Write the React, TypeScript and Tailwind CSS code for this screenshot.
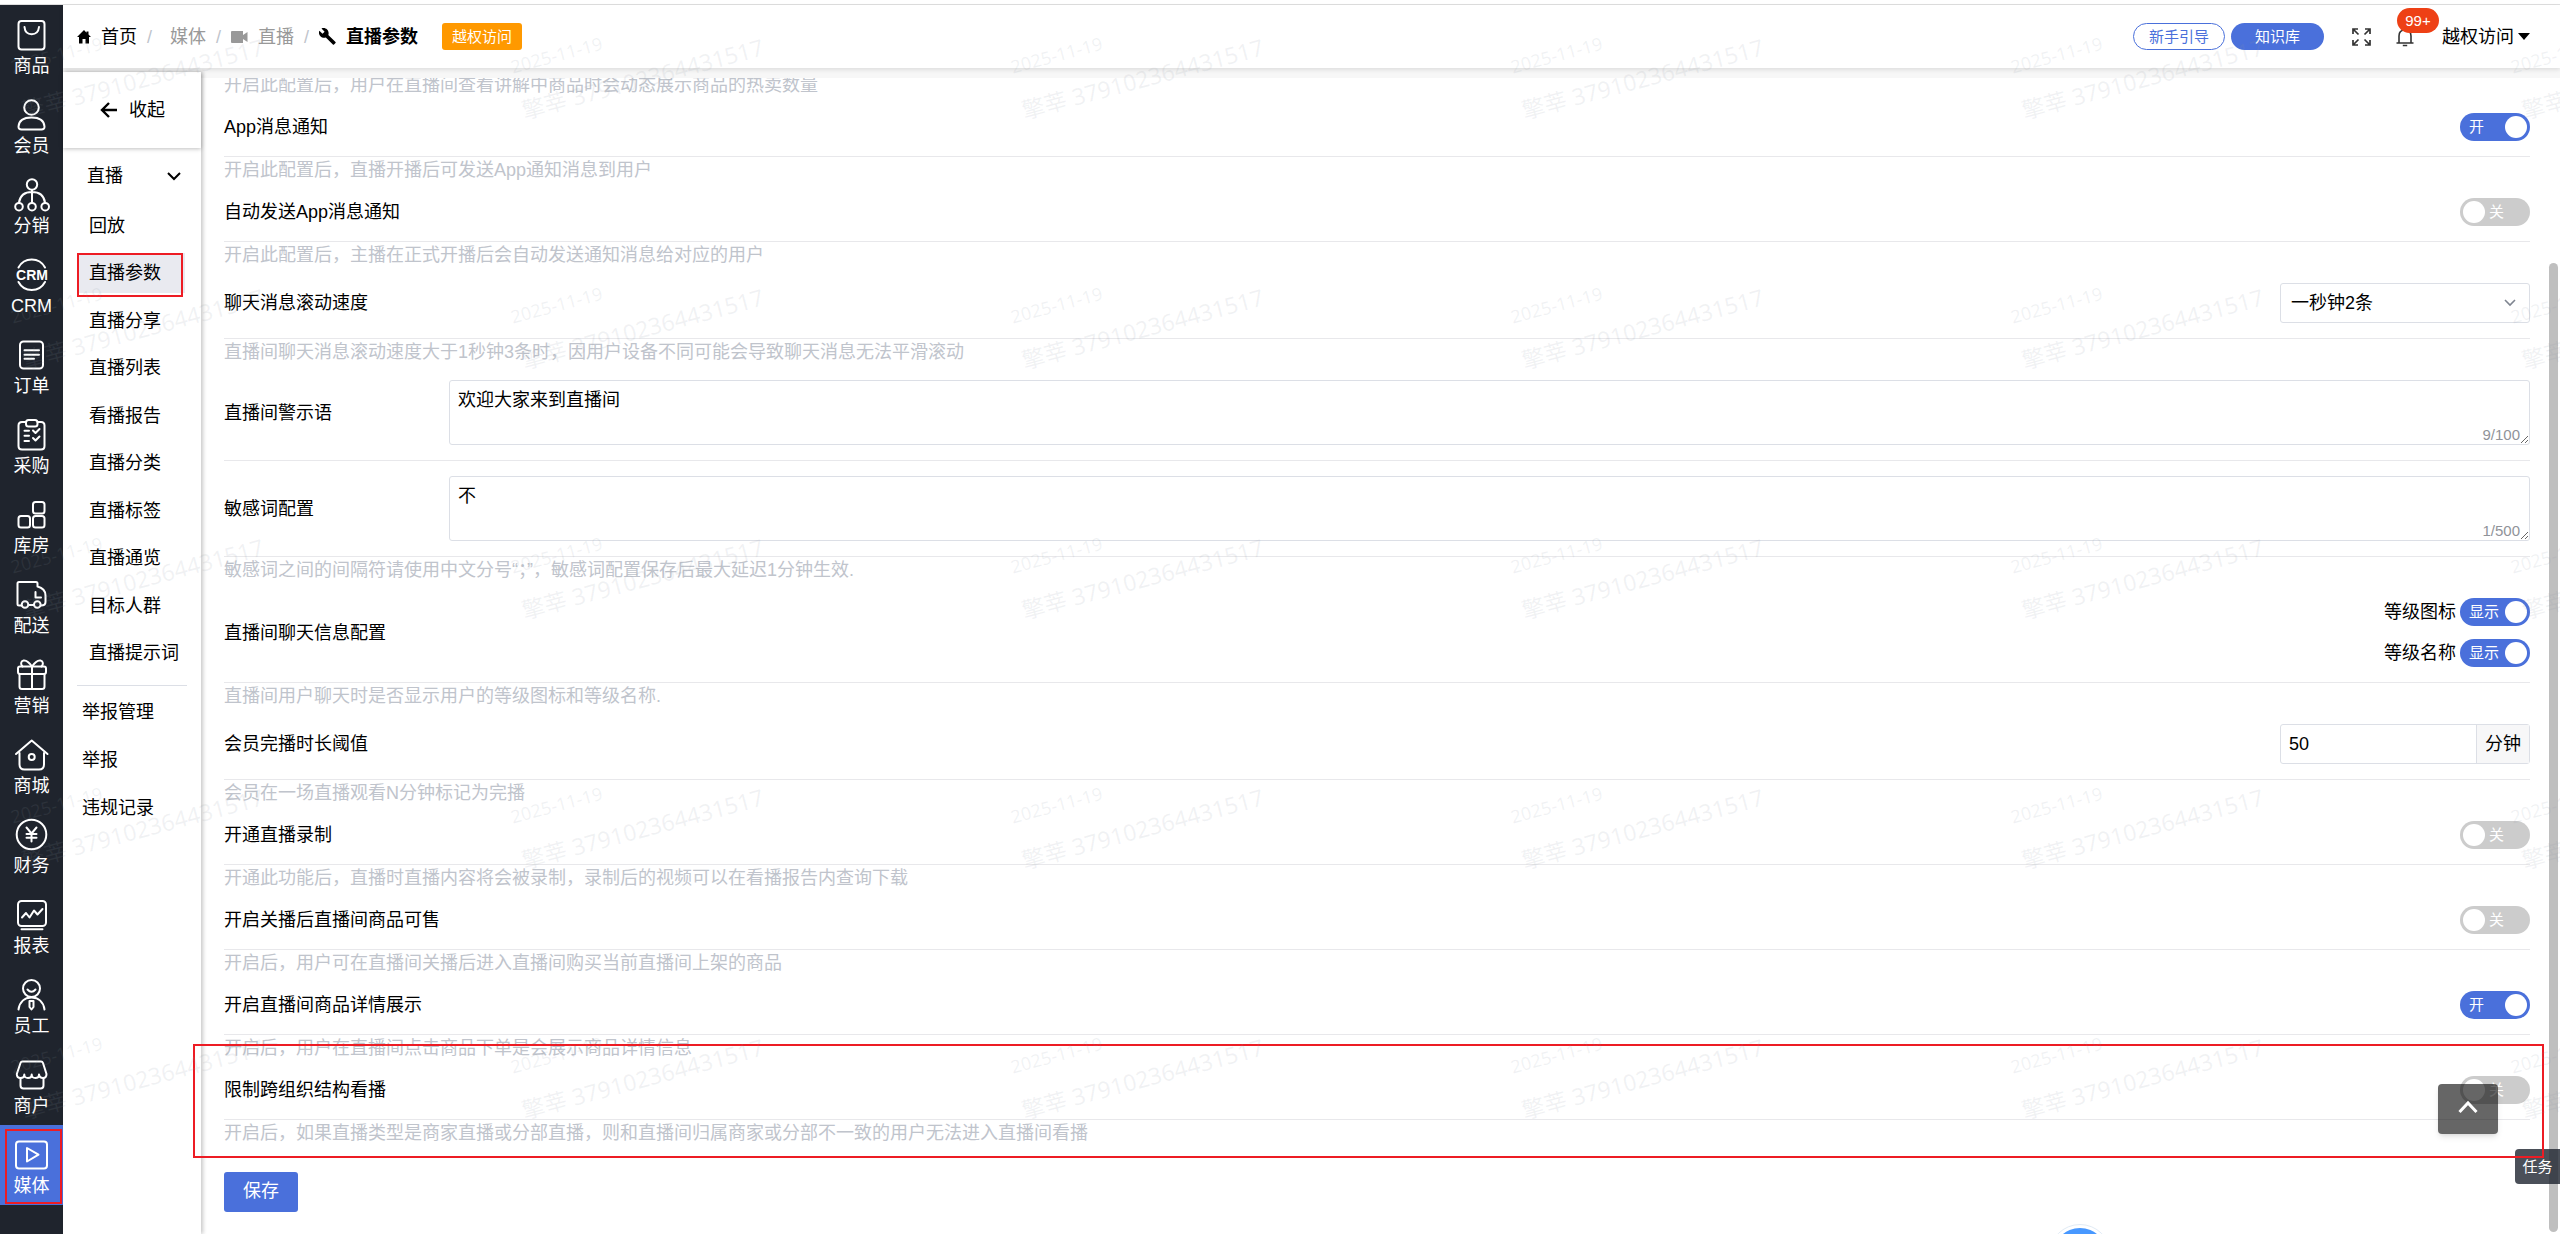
import { useState, type ComponentProps, type ReactNode } from "react";
import { clsx } from "clsx";

interface NavItem {
    name: string,
    icon: ReactNode,
}

interface MenuItem {
    name: string,
    marked?: boolean,
}

const navItems: NavItem[] = [
    {
        name: "商品",
        icon: <>
            <rect x="4.5" y="4" width="26" height="28.5" rx="3" />
            <path d="M10.5 10c.4 4.6 3.2 7.2 7.2 7.2S24.5 14.6 25 10" />
        </>
    },
    {
        name: "会员",
        icon: <>
            <circle cx="17.5" cy="10.5" r="7.3" />
            <path d="M4.5 29.5C5 23.5 10 20.5 17.5 20.5S30 23.5 30.5 29.5C30.6 31.5 29.5 32.5 27.5 32.5H7.5C5.5 32.5 4.4 31.5 4.5 29.5Z" />
        </>
    },
    {
        name: "分销",
        icon: <>
            <circle cx="18" cy="7.5" r="5.2" />
            <path d="M18 13v12.5M5 25.5C6 18.5 11 15 18 15s12 3.5 13 10.5" />
            <circle cx="5" cy="29.7" r="3.8" />
            <circle cx="18" cy="29.7" r="3.8" />
            <circle cx="31.2" cy="29.7" r="3.8" />
        </>
    },
    {
        name: "CRM",
        icon: <>
            <path d="M4.5 10.5a15 15 0 0 1 26.5 0M4.5 25a15 15 0 0 0 26.5 0" />
            <text x="18" y="22.5" textAnchor="middle" fontSize="14" fontWeight="700" fill="currentColor" stroke="none">CRM</text>
        </>
    },
    {
        name: "订单",
        icon: <>
            <rect x="6" y="4.5" width="23" height="27" rx="3.5" />
            <path d="M10.5 13.3h14.5M10.5 17.7h14.5M10.5 21.8h9.5" />
        </>
    },
    {
        name: "采购",
        icon: <>
            <path d="M12 5H8Q4.5 5 4.5 8.5V29Q4.5 32.5 8 32.5H27Q30.5 32.5 30.5 29V8.5Q30.5 5 27 5H23.5" />
            <rect x="12" y="3" width="11.5" height="6.5" rx="2.5" />
            <path d="M10.5 13.7h4.5M10.5 18.7h4.5M10.5 24h4.5M19 13.5l2.5 2.5 4-4M19 21l2.5 2.5 4-4" />
        </>
    },
    {
        name: "库房",
        icon: <>
            <rect x="19" y="5" width="11.5" height="11.5" rx="2.5" />
            <rect x="4.5" y="19" width="11.5" height="11.5" rx="2.5" />
            <rect x="19" y="19" width="11.5" height="11.5" rx="2.5" />
        </>
    },
    {
        name: "配送",
        icon: <>
            <path d="M7.5 28.5H5Q3.5 28.5 3.5 27V6.5Q3.5 5 5 5H22Q23.5 5 23.5 6.5V9.5Q31.5 11.5 31.5 18.5V25Q31.5 28.5 27 28.5M14.5 28h5" />
            <path d="M21.5 15v5.5h5.5" />
            <circle cx="11" cy="27.5" r="3.3" />
            <circle cx="23.3" cy="27.5" r="3.3" />
        </>
    },
    {
        name: "营销",
        icon: <>
            <rect x="4" y="9.5" width="28" height="7.5" rx="2" />
            <path d="M5.5 17V29.5Q5.5 32 8 32H28Q30.5 32 30.5 29.5V17M18 9.5V32M18 9.5C15 5 12.5 3 9.5 3.5 6.5 4.2 6.5 7.5 8.5 9.5M18 9.5C21 5 23.5 3 26.5 3.5 29.5 4.2 29.5 7.5 27.5 9.5" />
        </>
    },
    {
        name: "商城",
        icon: <>
            <path d="M2 17 17.7 3.5 33.5 17" />
            <path d="M5.5 16V27.5Q5.5 32.5 10.5 32.5H25Q30 32.5 30 27.5V16" />
            <circle cx="17.7" cy="20" r="3" />
        </>
    },
    {
        name: "财务",
        icon: <>
            <circle cx="17.5" cy="17.5" r="14.8" />
            <path d="M12.5 10.5l5 6 5-6M17.5 16.5v8M12.5 17h10M12.5 20.8h10" />
        </>
    },
    {
        name: "报表",
        icon: <>
            <rect x="4" y="4" width="28" height="25" rx="3.5" />
            <path d="M8 20.5l4-4.5 3.5 4.5 4.5-7 3.5 4 5-5.5M7.5 32.3h21" />
        </>
    },
    {
        name: "员工",
        icon: <>
            <circle cx="17.5" cy="11.5" r="8.5" />
            <path d="M13.5 12.5q4 4.5 8 0M4.5 32.5C5.5 25 10.5 20.5 17.5 20.5S29.5 25 30.5 32.5M15.5 24h4v6l-2 2.5-2-2.5Z" />
        </>
    },
    {
        name: "商户",
        icon: <>
            <path d="M8.5 4.5H27Q28.5 4.5 29 6L32.5 17Q32.5 21 29 21T25 17.5Q25 21 21.3 21T17.7 17.5Q17.7 21 14 21T10.3 17.5Q10.3 21 6.5 21T2.8 17L6.5 6Q7 4.5 8.5 4.5Z" />
            <path d="M6.5 21V28.5Q6.5 31.5 9.5 31.5H26.5Q29.5 31.5 29.5 28.5V21" />
        </>
    },
    {
        name: "媒体",
        icon: <>
            <rect x="2" y="4.5" width="31" height="27" rx="3" />
            <path d="M13 11v13.5l11.5-6.8Z" />
        </>
    },
];

const liveMenu: MenuItem[] = [
    { name: "回放" },
    { name: "直播参数", marked: true },
    { name: "直播分享" },
    { name: "直播列表" },
    { name: "看播报告" },
    { name: "直播分类" },
    { name: "直播标签" },
    { name: "直播通览" },
    { name: "目标人群" },
    { name: "直播提示词" },
];

const reportMenu = ["举报管理", "举报", "违规记录"];

export default function App() {
    return <div className="relative flex h-screen flex-col overflow-hidden bg-white font-['Liberation_Sans','Noto_Sans_CJK_SC',sans-serif] text-lg/[26px] text-black">
        <div className="h-[5px] shrink-0 border-b border-[#dedede]" />
        <div className="flex min-h-0 flex-1">
            <MainNav />
            <div className="flex min-w-0 flex-1 flex-col bg-[#f7f7f7]">
                <TopBar />
                <div className="flex min-h-0 flex-1">
                    <SubMenu />
                    <Settings />
                </div>
            </div>
        </div>

        <div className="absolute top-[263px] right-0.5 bottom-0.5 w-[9px] rounded-full bg-[#bfbfbf]" />
        <button aria-label="回到顶部" className="absolute right-[62px] bottom-[100px] flex h-[50px] w-[60px] items-center justify-center rounded-sm bg-black/60 pb-1 text-white shadow-md">
            <svg viewBox="0 0 20 14" className="h-3.5 w-5" fill="none" stroke="currentColor" strokeWidth="3">
                <path d="M1.5 12 10 3l8.5 9" />
            </svg>
        </button>
        <button className="absolute right-0 bottom-[50px] h-[35px] w-[45px] rounded-l-sm bg-[#1e2430]/80 text-[15px]/[35px] text-white">任务</button>
        <div className="absolute right-[449px] -bottom-[52px] size-[62px] rounded-full border border-[#e1ebf5] bg-white p-[3px]">
            <div className="size-full rounded-full bg-[#4898ff]" />
        </div>
        <div className="pointer-events-none absolute top-[1044px] right-4 left-[193px] z-20 h-[114px] border-2 border-[#ed1c24]" />
        <Watermark />
    </div>;
}

function MainNav() {
    const [current, setCurrent] = useState("媒体");

    return <nav className="w-[63px] shrink-0 bg-[#1f242d] text-white">
        {navItems.map(item => <button
            key={item.name}
            onClick={() => setCurrent(item.name)}
            className={clsx(
                "relative flex h-20 w-full flex-col items-center pt-3",
                current == item.name && "bg-[#4a70db]"
            )}
        >
            <svg viewBox="0 0 36 36" className="size-9 shrink-0" fill="none" stroke="currentColor" strokeWidth="2" strokeLinecap="round" strokeLinejoin="round">
                {item.icon}
            </svg>
            <span>{item.name}</span>
            {item.name == "媒体" && <span className="absolute top-1 right-px bottom-px left-[5px] border-2 border-[#ed1c24]" />}
        </button>)}
    </nav>;
}

function TopBar() {
    return <header className="z-10 flex h-[63px] shrink-0 items-center bg-white pr-[30px] pl-3.5 shadow-[0_2px_4px_rgba(0,0,0,0.1)]">
        <a href="#" className="flex items-center gap-2.5">
            <svg viewBox="0 0 14 14" className="size-3.5" fill="currentColor">
                <path d="M7 0 0 7h2v6.5h3.5V9h3v4.5H12V7h2L11.5 4.5V1.5h-2v1.2Z" />
            </svg>
            首页
        </a>
        <Slash />
        <a href="#" className="ml-[18px] text-[#999]">媒体</a>
        <Slash />
        <a href="#" className="ml-2.5 flex items-center gap-2.5 text-[#999]">
            <svg viewBox="0 0 17 12" className="h-3 w-[17px]" fill="currentColor">
                <path d="M1 0h11v4l4.5-3v10L12 8v4H1Q0 12 0 11V1Q0 0 1 0Z" />
            </svg>
            直播
        </a>
        <Slash />
        <span className="ml-2.5 flex items-center gap-2.5 font-bold">
            <svg viewBox="0 0 17 17" className="size-[17px]" fill="currentColor">
                <path d="M16.5 14 9.3 7C10 5.2 9.6 3.1 8.1 1.6 6.6.1 4.3-.3 2.5.6L5.6 3.7 3.5 5.8.4 2.7C-.5 4.5-.1 6.8 1.4 8.3c1.5 1.5 3.6 1.9 5.4 1.2l7.1 7.1c.3.3.8.3 1.1 0l1.5-1.5c.3-.3.3-.8 0-1.1Z" />
            </svg>
            直播参数
        </span>
        <span className="ml-6 rounded-[3px] bg-[#ff9900] px-2.5 text-[15px]/[27px] text-white">越权访问</span>

        <div className="ml-auto flex items-center">
            <button className="rounded-full border border-[#4a70db] px-[15px] text-[15px]/[25px] text-[#4a70db]">新手引导</button>
            <button className="ml-1.5 w-[93px] rounded-full bg-[#4a70db] text-[15px]/[27px] text-white">知识库</button>
            <button aria-label="全屏" className="ml-7">
                <svg viewBox="0 0 19 18" className="h-[18px] w-[19px]" fill="none" stroke="#333" strokeWidth="1.7">
                    <path d="M1 6V1h5M1.5 1.5l5 5M13 1h5v5M17.5 1.5l-5 5M1 12v5h5M1.5 16.5l5-5M18 12v5h-5M17.5 16.5l-5-5" />
                </svg>
            </button>
            <button aria-label="消息" className="relative ml-[25px]">
                <svg viewBox="0 0 18 20" className="h-5 w-[18px]" fill="none" stroke="#333" strokeWidth="1.6">
                    <path d="M9 1.5V3M3 16V9Q3 3 9 3T15 9V16M.5 16h17M6.8 18.5h4.4" />
                </svg>
                <span className="absolute -top-[19px] left-px w-[42px] rounded-full bg-[#ee4015] text-[15px]/[25px] text-white">99+</span>
            </button>
            <button className="ml-7 flex items-center gap-1">
                越权访问
                <svg viewBox="0 0 12 7" className="h-[7px] w-3" fill="currentColor">
                    <path d="M0 0h12L6 7Z" />
                </svg>
            </button>
        </div>
    </header>;
}

function Slash() {
    return <span className="ml-2.5 text-[#c0c4cc]">/</span>;
}

function SubMenu() {
    return <aside className="z-[5] mt-1 w-[138px] shrink-0 bg-white shadow-[2px_0_4px_rgba(0,0,0,0.22)]">
        <button className="flex h-[76px] w-full items-center gap-3 pl-[37px] shadow-[0_1px_4px_rgba(0,0,0,0.25)]">
            <svg viewBox="0 0 17 16" className="h-4 w-[17px]" fill="none" stroke="currentColor" strokeWidth="2.4">
                <path d="M17 8H2M9 1 2 8l7 7" />
            </svg>
            收起
        </button>
        <button className="mt-2 flex h-10 w-full items-center justify-between pr-5 pl-6">
            直播
            <svg viewBox="0 0 14 9" className="h-[9px] w-3.5" fill="none" stroke="currentColor" strokeWidth="2">
                <path d="M1 1l6 6 6-6" />
            </svg>
        </button>
        <ul className="mt-2.5 flex h-[467px] flex-col justify-between px-3.5">
            {liveMenu.map(item => <li key={item.name} className="relative">
                <a href="#" className={clsx(
                    "block h-10 w-[108px] pl-3 leading-10 whitespace-nowrap",
                    item.marked && "bg-[#e9eaf0]"
                )}>{item.name}</a>
                {item.marked && <span className="absolute top-0 right-1 -bottom-1 left-0 border-2 border-[#ed1c24]" />}
            </li>)}
        </ul>
        <hr className="mx-3.5 mt-3 border-[#dcdfe6]" />
        <ul className="mt-1.5 flex flex-col gap-2 pl-[19px]">
            {reportMenu.map(name => <li key={name}>
                <a href="#" className="block h-10 leading-10">{name}</a>
            </li>)}
        </ul>
    </aside>;
}

function Settings() {
    return <main className="mt-2.5 min-w-0 flex-1 overflow-hidden bg-white">
        <div className="-mt-1.5 pr-[30px] pl-[23px]">
            <Help>开启此配置后，用户在直播间查看讲解中商品时会动态展示商品的热卖数量</Help>
            <Row label="App消息通知" htmlFor="app-notice">
                <Toggle id="app-notice" defaultChecked />
            </Row>
            <Help>开启此配置后，直播开播后可发送App通知消息到用户</Help>
            <Row label="自动发送App消息通知" htmlFor="auto-notice">
                <Toggle id="auto-notice" />
            </Row>
            <Help>开启此配置后，主播在正式开播后会自动发送通知消息给对应的用户</Help>
            <Row label="聊天消息滚动速度" htmlFor="speed">
                <div className="relative w-[250px]">
                    <select id="speed" className="block h-10 w-full appearance-none rounded-[3px] border border-[#dcdfe6] bg-white px-2.5">
                        <option>一秒钟2条</option>
                    </select>
                    <svg viewBox="0 0 12 8" className="pointer-events-none absolute top-4 right-3.5 h-2 w-3" fill="none" stroke="#7f8590" strokeWidth="1.6">
                        <path d="M1 1l5 5 5-5" />
                    </svg>
                </div>
            </Row>
            <Help>直播间聊天消息滚动速度大于1秒钟3条时，因用户设备不同可能会导致聊天消息无法平滑滚动</Help>
            <Row label="直播间警示语" htmlFor="warning">
                <CountedTextarea id="warning" defaultValue="欢迎大家来到直播间" maxLength={100} />
            </Row>
            <Row label="敏感词配置" htmlFor="words">
                <CountedTextarea id="words" defaultValue="不" maxLength={500} />
            </Row>
            <Help>敏感词之间的间隔符请使用中文分号“；”，敏感词配置保存后最大延迟1分钟生效.</Help>
            <Row label="直播间聊天信息配置">
                <div className="flex flex-col gap-[13px]">
                    <div className="flex items-center gap-1">
                        <label htmlFor="level-icon">等级图标</label>
                        <Toggle id="level-icon" on="显示" off="隐藏" defaultChecked />
                    </div>
                    <div className="flex items-center gap-1">
                        <label htmlFor="level-name">等级名称</label>
                        <Toggle id="level-name" on="显示" off="隐藏" defaultChecked />
                    </div>
                </div>
            </Row>
            <Help>直播间用户聊天时是否显示用户的等级图标和等级名称.</Help>
            <Row label="会员完播时长阈值" htmlFor="minutes">
                <div className="flex h-10 w-[250px] rounded-[3px] border border-[#dcdfe6]">
                    <input id="minutes" defaultValue="50" className="min-w-0 flex-1 px-2" />
                    <span className="border-l border-[#dcdfe6] bg-[#f7f7f8] px-2 leading-[38px]">分钟</span>
                </div>
            </Row>
            <Help>会员在一场直播观看N分钟标记为完播</Help>
            <Row label="开通直播录制" htmlFor="record">
                <Toggle id="record" />
            </Row>
            <Help>开通此功能后，直播时直播内容将会被录制，录制后的视频可以在看播报告内查询下载</Help>
            <Row label="开启关播后直播间商品可售" htmlFor="sale">
                <Toggle id="sale" />
            </Row>
            <Help>开启后，用户可在直播间关播后进入直播间购买当前直播间上架的商品</Help>
            <Row label="开启直播间商品详情展示" htmlFor="detail">
                <Toggle id="detail" defaultChecked />
            </Row>
            <Help>开启后，用户在直播间点击商品下单是会展示商品详情信息</Help>
            <Row label="限制跨组织结构看播" htmlFor="limit">
                <Toggle id="limit" />
            </Row>
            <Help>开启后，如果直播类型是商家直播或分部直播，则和直播间归属商家或分部不一致的用户无法进入直播间看播</Help>
            <button className="mt-[26px] h-10 rounded-[3px] bg-[#4a70db] px-[19px] pb-0.5 text-white">保存</button>
        </div>
    </main>;
}

function Help({ children }: { children: ReactNode }) {
    return <p className="text-[#c0c4cc]">{children}</p>;
}

function Row({
    label,
    htmlFor,
    children
}: {
    label: string,
    htmlFor?: string,
    children: ReactNode
}) {
    return <div className="flex items-center border-b border-[#e8e8eb] py-[15px]">
        <label htmlFor={htmlFor} className="w-[225px] shrink-0 whitespace-nowrap">{label}</label>
        <div className="flex flex-1 justify-end">{children}</div>
    </div>;
}

function Toggle({
    on = "开",
    off = "关",
    ...props
}: {
    on?: string,
    off?: string
} & ComponentProps<"input">) {
    const [checked, setChecked] = useState(!!props.defaultChecked);

    return <span className="relative block h-7 w-[70px] text-[15px]/[27px] text-white">
        <input
            type="checkbox"
            role="switch"
            onChange={e => setChecked(e.target.checked)}
            className="block h-7 w-[70px] cursor-pointer appearance-none rounded-full bg-[#ccc] p-[3px] before:block before:size-[22px] before:rounded-full before:bg-white checked:bg-[#4a70db] checked:before:ml-[42px]"
            {...props}
        />
        <span className={clsx("pointer-events-none absolute top-0", checked ? "left-[9px]" : "left-[29px]")}>
            {checked ? on : off}
        </span>
    </span>;
}

function CountedTextarea({ defaultValue, maxLength, ...props }: ComponentProps<"textarea">) {
    const [value, setValue] = useState(String(defaultValue));

    return <div className="relative flex-1">
        <textarea
            value={value}
            maxLength={maxLength}
            onChange={e => setValue(e.target.value)}
            className="block h-[65px] w-full resize-y rounded-[3px] border border-[#dcdfe6] bg-white px-2 py-1.5"
            {...props}
        />
        <span className="pointer-events-none absolute right-2.5 bottom-px text-[15px]/[18px] text-[#909399]">{value.length}/{maxLength}</span>
    </div>;
}

// account stamp repeated over the whole page
function Watermark() {
    return <div aria-hidden className="pointer-events-none absolute inset-0 z-20 grid auto-rows-[250px] grid-cols-[repeat(6,500px)] overflow-hidden font-['Noto_Sans','Noto_Sans_CJK_SC',sans-serif] text-[#8c96a0]/12 select-none">
        {Array.from({ length: 30 }, (_, i) => <div key={i} className="pt-[47px] pl-2.5">
            <p className="w-max origin-left -rotate-15 pt-2 text-lg/6">2025-11-19</p>
            <p className="ml-2.5 w-max origin-left -rotate-15 pt-4 text-[23px]/8">擎莘 379102364431517</p>
        </div>)}
    </div>;
}
